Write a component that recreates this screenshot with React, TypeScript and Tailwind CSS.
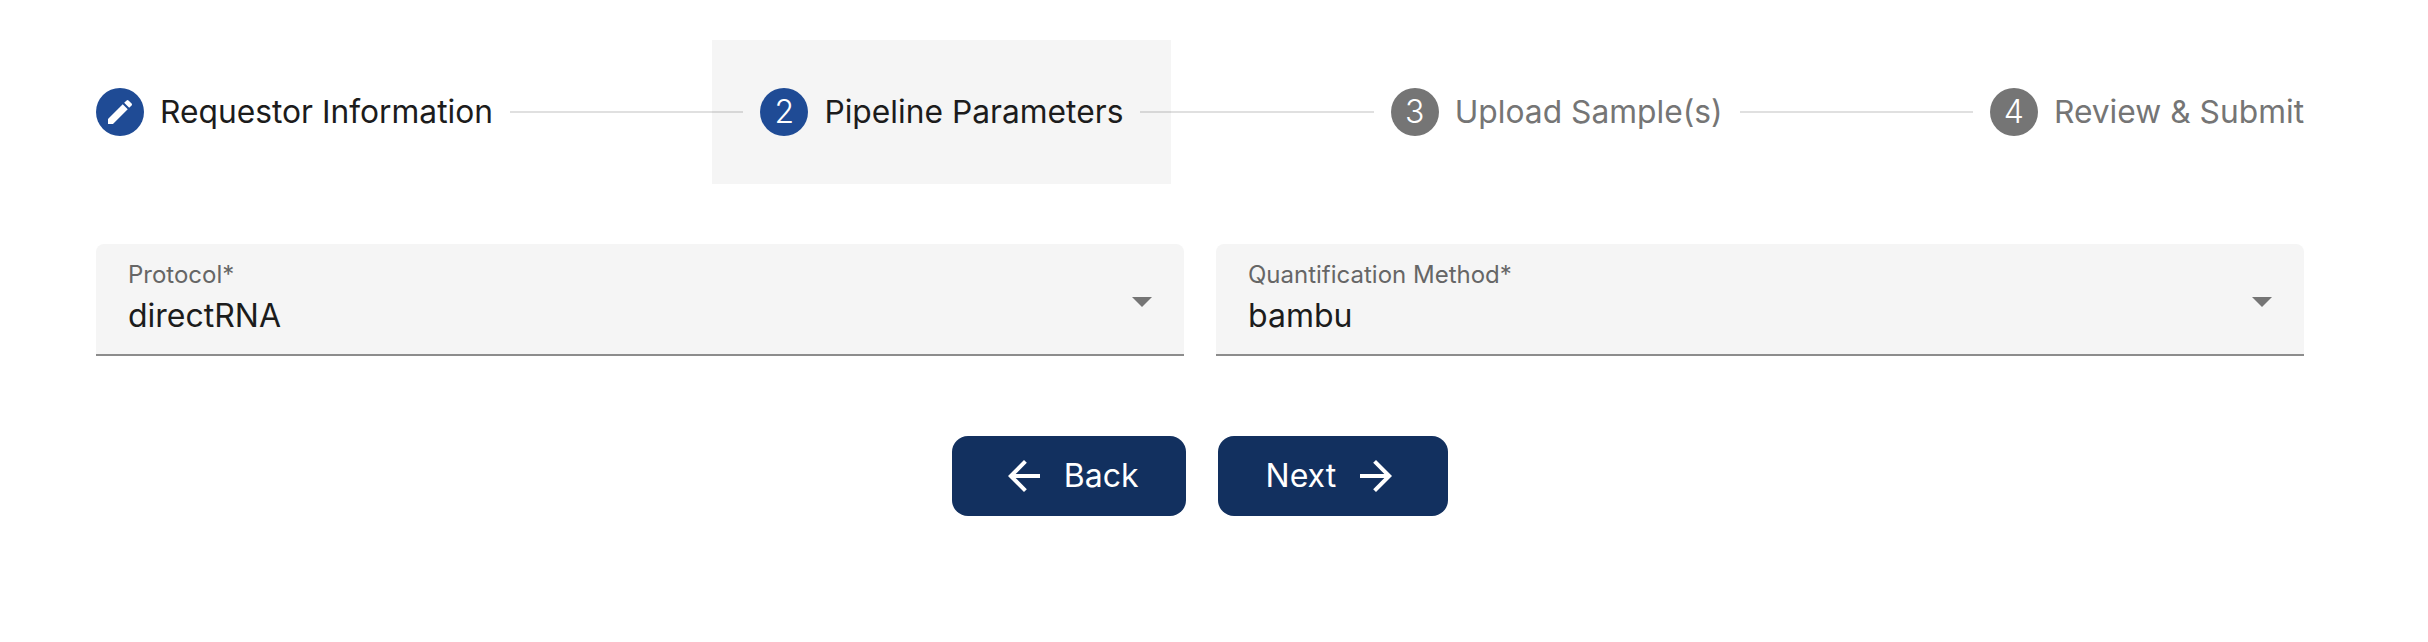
import type { ReactNode } from "react";

const Step = ({ icon, label, active, muted }: { icon: ReactNode; label: string; active?: boolean; muted?: boolean }) => {
  return (
    <div className="relative flex items-center gap-4 shrink-0">
      {active && <div className="absolute -inset-12 -z-10 bg-[#f5f5f5]" />}
      <div
        className={`flex h-12 w-12 items-center justify-center rounded-full text-[32px] font-light text-white ${
          muted ? "bg-[#757575]" : "bg-[#1f4b95]"
        }`}
      >
        {icon}
      </div>
      <span className={`text-[31.75px] leading-[48px] ${muted ? "text-[#757575]" : "text-[#1c1c1c]"}`}>{label}</span>
    </div>
  );
};

const Line = () => <div className="mx-[17px] h-[2px] flex-1 bg-[#0000001f]" />;

const Field = ({ label, value }: { label: string; value: string }) => {
  return (
    <div className="flex h-[112px] w-[1088px] items-center justify-between rounded-t-[8px] border-b-2 border-[#8c8c8c] bg-[#f5f5f5] pl-8 pr-[18px]">
      <div className="flex flex-col">
        <span className="text-[24px] leading-[32px] text-[#666666] -translate-y-[2px]">{label}</span>
        <span className="text-[32px] leading-[44px] text-[#1c1c1c] translate-y-[1px]">{value}</span>
      </div>
      <svg viewBox="0 0 24 24" className="mt-1 h-12 w-12 fill-[#757575]">
        <path d="M7 10l5 5 5-5z" />
      </svg>
    </div>
  );
};

const Btn = ({ children }: { children: ReactNode }) => {
  return (
    <button className="flex h-20 items-center gap-4 rounded-[16px] bg-[#12305f] px-[47.5px] text-[32px] text-white">
      {children}
    </button>
  );
};

export default function App() {
  return (
    <div className="isolate min-h-[642px] w-[2304px] bg-white pl-24 pt-[88px] font-['Inter',sans-serif]">
      {/* Stepper */}
      <div className="flex items-center">
        <Step
          label="Requestor Information"
          icon={
            <svg viewBox="0 0 24 24" className="h-8 w-8 fill-white">
              <path d="M3 17.25V21h3.75L17.81 9.94l-3.75-3.75L3 17.25zM20.71 7.04c.39-.39.39-1.02 0-1.41l-2.34-2.34a.9959.9959 0 0 0-1.41 0l-1.83 1.83 3.75 3.75 1.83-1.83z" />
            </svg>
          }
        />
        <Line />
        <Step label="Pipeline Parameters" icon="2" active />
        <Line />
        <Step label="Upload Sample(s)" icon="3" muted />
        <Line />
        <Step label="Review & Submit" icon="4" muted />
      </div>

      {/* Fields */}
      <div className="mt-[108px] flex gap-8">
        <Field label="Protocol*" value="directRNA" />
        <Field label="Quantification Method*" value="bambu" />
      </div>

      {/* Actions */}
      <div className="mt-20 flex justify-center gap-8">
        <Btn>
          <svg viewBox="0 0 24 24" className="h-12 w-12 fill-white">
            <path d="M20 11H7.83l5.59-5.59L12 4l-8 8 8 8 1.41-1.41L7.83 13H20v-2z" />
          </svg>
          Back
        </Btn>
        <Btn>
          Next
          <svg viewBox="0 0 24 24" className="h-12 w-12 fill-white">
            <path d="M12 4l-1.41 1.41L16.17 11H4v2h12.17l-5.58 5.59L12 20l8-8z" />
          </svg>
        </Btn>
      </div>
    </div>
  );
}
